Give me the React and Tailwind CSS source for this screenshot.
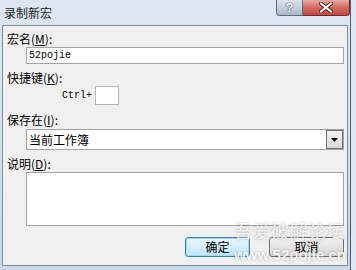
import React from 'react'

const cjk = "font-['SimSun','Noto_Sans_CJK_SC',sans-serif]"
const mono = "font-['Liberation_Mono',monospace]"

function Label({ text, k, className = '' }) {
    return (
        <div className={`h-4 leading-4 text-[12px] text-black pl-[4px] ${cjk} ${className}`}>
            {text}(<span className="underline">{k}</span>):
        </div>
    )
}

export default function App() {
    return (
        <div className="w-[356px] h-[270px] bg-[#dde7f2] relative overflow-hidden">
            {/* window */}
            <div className="w-[351px] h-full flex flex-col border-r border-[#4d5a69] bg-gradient-to-b from-[#dce7f3] via-[#d3e0ee] to-[#c8d8ea]">
                {/* title bar */}
                <div className="h-[25px] flex items-start">
                    <div className={`pl-[4px] h-[25px] flex items-center text-[12px] text-[#1b1b1b] ${cjk}`}>录制新宏</div>
                    <div className="ml-auto flex">
                        <div className="w-[27px] h-[16px] rounded-bl-[4px] border border-t-0 border-[#5d6b7b] bg-gradient-to-b from-[#dbe4ee] to-[#a9b9ca] flex items-center justify-center">
                            <span className="text-[13px] font-bold leading-none text-white font-['Liberation_Sans',sans-serif] [text-shadow:0_0_1px_#333,0_0_1px_#333]">?</span>
                        </div>
                        <div className="w-[47px] h-[16px] rounded-br-[4px] border border-t-0 border-l-0 border-[#6b2c28] bg-gradient-to-b from-[#e6aaa4] via-[#d26a60] to-[#c4483e] flex items-center justify-center">
                            <svg width="14" height="11" viewBox="0 0 14 11">
                                <path d="M2 1.5 L12 9.5 M12 1.5 L2 9.5" stroke="#5a2420" strokeWidth="4" strokeLinecap="square" />
                                <path d="M2 1.5 L12 9.5 M12 1.5 L2 9.5" stroke="#ffffff" strokeWidth="2" strokeLinecap="square" />
                            </svg>
                        </div>
                    </div>
                </div>

                {/* client area */}
                <div className="ml-[2px] w-[346px] h-[241px] bg-[#f0f0f0] border border-[#7d8da0] flex flex-col">
                    <Label text="宏名" k="M" className="mt-[5px]" />
                    <div className={`ml-[23px] w-[318px] h-[17px] border border-[#a3a3a3] bg-white pl-[2px] flex items-center text-[10px] text-black ${mono}`}>
                        52pojie
                    </div>

                    <Label text="快捷键" k="K" className="mt-[6px]" />
                    <div className="h-[19px] flex items-center pl-[59px]">
                        <span className={`text-[10px] text-black ${mono}`}>Ctrl+</span>
                        <div className="ml-[3px] w-[24px] h-[19px] border border-[#b4b4b4] bg-white"></div>
                    </div>

                    <Label text="保存在" k="I" className="mt-[7px]" />
                    <div className="mt-[1px] ml-[23px] w-[318px] h-[21px] border border-[#a3a3a3] bg-white flex items-center">
                        <span className={`pl-[2px] text-[12px] text-black ${cjk}`}>当前工作簿</span>
                        <div className="ml-auto mr-0 w-[17px] h-[19px] border border-[#707070] bg-gradient-to-b from-[#f4f4f4] to-[#d8d8d8] flex items-center justify-center">
                            <svg width="7" height="4" viewBox="0 0 7 4">
                                <path d="M0 0 L7 0 L3.5 4 Z" fill="#000" />
                            </svg>
                        </div>
                    </div>

                    <Label text="说明" k="D" className="mt-[6px]" />
                    <div className="ml-[23px] w-[318px] h-[54px] border border-[#a3a3a3] bg-white"></div>

                    <div className="mt-[11px] flex justify-end gap-[19px] pr-[3px]">
                        <button className={`w-[65px] h-[20px] rounded-[3px] border border-[#3c7fb1] bg-gradient-to-b from-[#eaf6fd] to-[#bee6fd] shadow-[inset_0_0_0_1px_#a6d5f2] text-[12px] text-black ${cjk}`}>
                            确定
                        </button>
                        <button className={`w-[75px] h-[20px] rounded-[3px] border border-[#707070] bg-gradient-to-b from-[#f2f2f2] to-[#d5d5d5] text-[12px] text-black ${cjk}`}>
                            取消
                        </button>
                    </div>
                </div>
            </div>

            {/* watermark */}
            <div className="absolute left-[234px] top-[220px] flex flex-col items-start pointer-events-none">
                <span className={`text-[18px] leading-[20px] tracking-[0.5px] text-white/90 [text-shadow:0_0_2px_rgba(0,0,0,0.35)] ${cjk}`}>吾爱破解论坛</span>
                <span className="text-[15px] leading-[17px] font-bold text-white/90 font-['Liberation_Sans',sans-serif] [text-shadow:0_0_2px_rgba(0,0,0,0.35)] mt-[6px]">www.52pojie.cn</span>
            </div>
        </div>
    )
}
